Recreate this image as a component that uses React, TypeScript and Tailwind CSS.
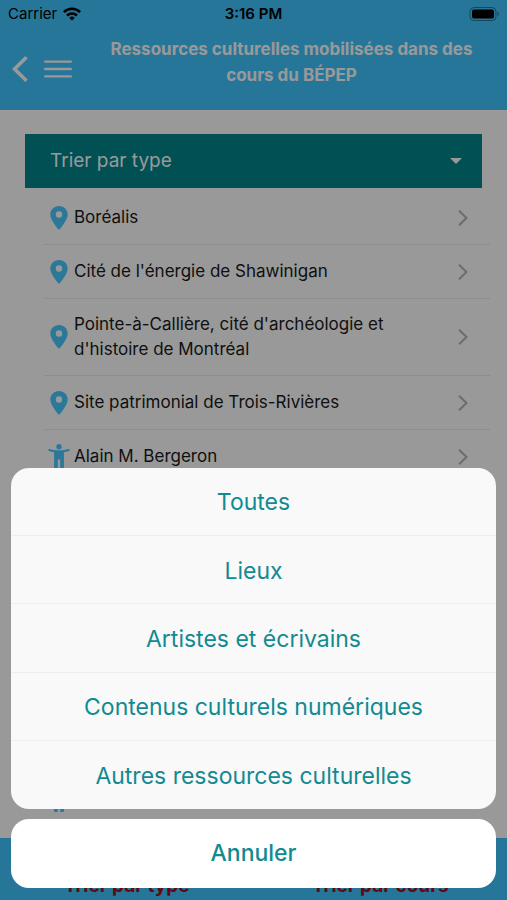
import React from 'react';

type Kind = 'place' | 'person';

interface Resource {
  kind: Kind;
  name?: string;
  tall?: boolean;
}

const resources: Resource[] = [
  { kind: 'place', name: 'Boréalis' },
  { kind: 'place', name: "Cité de l'énergie de Shawinigan" },
  { kind: 'place', name: "Pointe-à-Callière, cité d'archéologie et d'histoire de Montréal" },
  { kind: 'place', name: 'Site patrimonial de Trois-Rivières' },
  { kind: 'person', name: 'Alain M. Bergeron' },
  { kind: 'person', tall: true },
  { kind: 'person' },
  { kind: 'person' },
  { kind: 'person' },
  { kind: 'person' },
  { kind: 'person' },
];

const sheetOptions = [
  'Toutes',
  'Lieux',
  'Artistes et écrivains',
  'Contenus culturels numériques',
  'Autres ressources culturelles',
];

const PinIcon = () => (
  <svg viewBox="0 0 18 24" className="h-6 w-[18px]" fill="currentColor" aria-hidden="true">
    <path
      fillRule="evenodd"
      d="M9 0C4 0 .3 3.800.3 8.500.3 14.500 9 24 9 24s8.700-9.500 8.700-15.500C17.700 3.800 14 0 9 0Zm0 11.700a3.200 3.200 0 1 1 0-6.400 3.200 3.200 0 0 1 0 6.400Z"
    />
  </svg>
);

const PersonIcon = () => (
  <svg viewBox="0 0 22 26" className="h-[26px] w-[22px] shrink-0" fill="currentColor" aria-hidden="true">
    <circle cx="11" cy="2.800" r="2.700" />
    <path d="M1.200 4.900C4.200 5.700 7.500 6.200 11 6.200s6.800-.5 9.800-1.300c.9-.2 1.300 1.700.4 2-1.900.6-3.600 1-5.300 1.300V25c0 .6-.4 1-1 1h-1.700c-.6 0-1-.4-1-1v-9.500H9.800V25c0 .6-.4 1-1 1H7.100c-.6 0-1-.4-1-1V8.200C4.400 7.900 2.700 7.500.8 6.900c-.9-.3-.5-2.200.4-2Z" />
  </svg>
);

const Chevron = () => (
  <svg viewBox="0 0 10 16" className="h-4 w-[10px]" fill="none" stroke="currentColor" strokeWidth="2" aria-hidden="true">
    <path d="M1 .8 8.500 8 1 15.200" />
  </svg>
);

const StatusBar = () => (
  <div className="grid grid-cols-3 items-center px-2 pt-1 text-[15px] leading-5 text-black">
    <div className="flex items-center gap-1.5">
      <span>Carrier</span>
      <svg viewBox="0 0 18 14" className="h-[14px] w-[18px]" fill="none" stroke="currentColor" strokeWidth="2.600" aria-hidden="true">
        <path d="M.9 5.100a11.500 11.500 0 0 1 16.200 0" />
        <path d="M4 8.500a7.100 7.100 0 0 1 10 0" />
        <path d="M9 13.600 6.300 10.900a3.800 3.800 0 0 1 5.400 0Z" fill="currentColor" stroke="none" />
      </svg>
    </div>
    <span className="text-center font-semibold">3:16 PM</span>
    <svg viewBox="0 0 30 14" className="h-[14px] w-[30px] justify-self-end" aria-hidden="true">
      <rect x="1" y=".5" width="26" height="13" rx="4" fill="none" stroke="currentColor" strokeOpacity=".4" />
      <rect x="3" y="2.500" width="22" height="9" rx="2" fill="currentColor" />
      <path d="M28.500 5v4c.9-.3 1.300-1.100 1.300-2s-.4-1.700-1.300-2Z" fill="currentColor" fillOpacity=".4" />
    </svg>
  </div>
);

const Header = () => (
  <header className="h-[110px] bg-[#3fc5ff]">
    <StatusBar />
    <div className="flex items-start pl-3 pr-6 pt-3 text-white">
      <button type="button" aria-label="Retour" className="mt-5">
        <svg viewBox="0 0 16 26" className="h-[26px] w-4" fill="none" stroke="currentColor" strokeWidth="3.600" aria-hidden="true">
          <path d="M14.500 1.300 2.500 13l12 11.700" />
        </svg>
      </button>
      <button type="button" aria-label="Menu" className="ml-4 mt-6">
        <svg viewBox="0 0 28 18" className="h-[18px] w-7" stroke="currentColor" strokeWidth="2.400" strokeLinecap="round" aria-hidden="true">
          <path d="M1.200 1.600h25.600M1.200 9h25.600M1.200 16.400h25.600" />
        </svg>
      </button>
      <h1 className="flex-1 pl-7 text-center text-[17px] font-bold leading-[26px]">
        Ressources culturelles mobilisées dans des cours du BÉPEP
      </h1>
    </div>
  </header>
);

const ResourceRow: React.FC<{ item: Resource }> = ({ item }) => (
  <li className="border-b border-[#ebebeb]">
    <a
      href="#"
      className={`flex items-center pr-[22px] text-[17px] leading-[25px] text-[#1a1a1a] ${item.tall ? 'h-[71px]' : 'min-h-[53px] py-[13px]'}`}
    >
      <span className="-my-1 flex w-[30px] shrink-0 justify-center text-[#48c8ff]">
        {item.kind === 'place' ? <PinIcon /> : <PersonIcon />}
      </span>
      <span className="flex-1 pr-16">{item.name}</span>
      <span className="text-[#b5b5b5]">
        <Chevron />
      </span>
    </a>
  </li>
);

const ActionSheet = () => (
  <div className="absolute inset-0 flex flex-col justify-end gap-[10px] bg-black/40 px-[11px] pb-3" role="dialog" aria-label="Trier par type">
    <div className="grid min-h-[341px] auto-rows-fr divide-y divide-[#ededed] overflow-hidden rounded-[18px] bg-[#f9f9f9]">
      {sheetOptions.map((option) => (
        <button key={option} type="button" className="pt-0.5 text-[23px] text-[#128a91]">
          {option}
        </button>
      ))}
    </div>
    <button type="button" className="h-[69px] rounded-[18px] bg-white text-[23px] font-medium text-[#128a91]">
      Annuler
    </button>
  </div>
);

export default function App() {
  return (
    <div className="relative flex h-screen flex-col overflow-hidden bg-white font-['Inter','Liberation_Sans',sans-serif]">
      <Header />
      <main className="min-h-0 flex-1 overflow-hidden pt-6">
        <button
          type="button"
          className="mx-[25px] flex h-[54px] w-[calc(100%-50px)] items-center justify-between bg-[#00858c] pl-[25px] pr-5 text-[19px] text-white"
        >
          Trier par type
          <svg viewBox="0 0 12 6" className="h-[6px] w-3" fill="currentColor" aria-hidden="true">
            <path d="M0 0h12L6 6Z" />
          </svg>
        </button>
        <ul className="ml-11 mr-[17px] pt-[3px]">
          {resources.map((item, index) => (
            <ResourceRow key={index} item={item} />
          ))}
        </ul>
      </main>
      <footer className="grid h-[62px] grid-cols-2 items-end bg-[#3fc5ff] pb-0.5 text-[19px] font-bold leading-6 text-[#9f101c]">
        <button type="button">Trier par type</button>
        <button type="button">Trier par cours</button>
      </footer>
      <ActionSheet />
    </div>
  );
}
